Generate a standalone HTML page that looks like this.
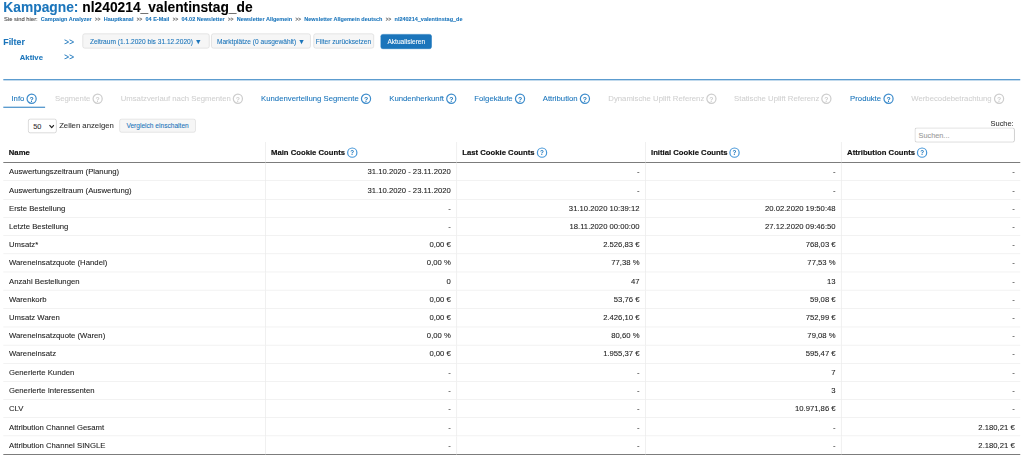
<!DOCTYPE html>
<html lang="de">
<head>
<meta charset="utf-8">
<title>Kampagne: nl240214_valentinstag_de</title>
<style>
html,body{margin:0;padding:0;background:#fff;overflow:hidden;}
body{width:1024px;height:457px;position:relative;}
#page{position:absolute;left:0;top:0;width:1862px;height:832px;transform:scale(0.55);transform-origin:0 0;
  font-family:"Liberation Sans","DejaVu Sans",sans-serif;font-size:14px;color:#222;-webkit-text-stroke:0.15px currentColor;}
#page *{box-sizing:border-box;}
.abs{position:absolute;white-space:nowrap;}
h1{position:absolute;left:6px;top:-2px;margin:0;font-size:25.1px;line-height:28px;font-weight:bold;color:#000;white-space:nowrap;}
h1 span{color:#1b75bb;}
.crumb{left:7.3px;top:29px;font-size:10.03px;line-height:12px;color:#444;}
.crumb a{color:#1b75bb;font-weight:bold;text-decoration:none;}
.crumb i{font-style:normal;color:#666;padding:0 6px;font-size:8.5px;font-weight:bold;}
.blue{color:#1b75bb;}
.btn{position:absolute;height:27.4px;line-height:28.6px;border:1px solid #d3d3d3;border-radius:4px;background:#f6f6f6;color:#1b75bb;font-size:12px;text-align:center;white-space:nowrap;}
.btn.primary{background:#1b75bb;border-color:#1b75bb;color:#fff;}
.hr{position:absolute;left:5.8px;width:1849.2px;top:143.5px;height:2px;background:#3584c4;}
.tab{position:absolute;top:169.3px;font-size:14.08px;line-height:20px;color:#1b75bb;white-space:nowrap;}
.tab.dis{color:#d0d0d0;}
.q{display:inline-block;width:19px;height:19px;vertical-align:-5px;margin-left:3.6px;overflow:visible;}
.q circle{fill:none;stroke:#3d8ccc;stroke-width:2.2;}
.q text{font-family:"Liberation Sans","DejaVu Sans",sans-serif;font-size:12.5px;font-weight:bold;fill:#1b75bb;text-anchor:middle;}
.dis .q circle{stroke:#cdcdcd;}
.dis .q text{fill:#cdcdcd;}
.dt{position:absolute;border-collapse:separate;border-spacing:0;table-layout:fixed;font-size:14px;color:#222;}
.dt th{height:38.1px;line-height:24px;padding:0 0 0 9.9px;text-align:left;font-weight:bold;color:#111;white-space:nowrap;border-bottom:1px solid #111;vertical-align:middle;-webkit-text-stroke:0.3px currentColor;}
.dt th:first-child{padding-left:10.2px;}
.dt td{height:33.15px;padding:0 10px 1.3px 0;text-align:right;white-space:nowrap;font-size:14px;border-bottom:1px solid #e7e7e7;vertical-align:middle;}
.dt td:first-child{text-align:left;padding-left:10.5px;font-size:14.08px;}
.dt th+th,.dt td+td{border-left:1px solid #e4e4e4;}
.dt tr:last-child td{border-bottom-color:#111;}
th .q{margin-left:3.5px;vertical-align:-5.2px;}
th .q circle{stroke:#4596d8;stroke-width:2.2;}
th .q text{font-size:11.5px;}
</style>
</head>
<body>
<div id="page">
<h1><span>Kampagne:</span> nl240214_valentinstag_de</h1>
<div class="abs crumb"><span style="font-size:10.6px">Sie sind hier:</span> &nbsp;<a>Campaign Analyzer</a><i>&gt;&gt;</i><a>Hauptkanal</a><i>&gt;&gt;</i><a>04 E-Mail</a><i>&gt;&gt;</i><a>04.02 Newsletter</a><i>&gt;&gt;</i><a>Newsletter Allgemein</a><i>&gt;&gt;</i><a>Newsletter Allgemein deutsch</a><i>&gt;&gt;</i><a>nl240214_valentinstag_de</a></div>
<div class="abs blue" style="left:6px;top:66px;font-size:16px;line-height:20px;font-weight:bold;">Filter</div>
<div class="abs blue" style="left:117px;top:66px;font-size:15px;line-height:20px;">&gt;&gt;</div>
<div class="abs blue" style="left:36px;top:93.5px;font-size:14px;line-height:20px;font-weight:bold;">Aktive</div>
<div class="abs blue" style="left:117px;top:94px;font-size:15px;line-height:20px;">&gt;&gt;</div>
<div class="btn" style="left:149.5px;top:60.9px;width:231.5px;">Zeitraum (1.1.2020 bis 31.12.2020) <span style="font-size:13px;line-height:0">▼</span></div>
<div class="btn" style="left:384px;top:60.9px;width:181px;">Marktplätze (0 ausgewählt) <span style="font-size:13px;line-height:0">▼</span></div>
<div class="btn" style="left:569.5px;top:60.9px;width:110px;">Filter zurücksetzen</div>
<div class="btn primary" style="left:692.2px;top:61.5px;width:93px;line-height:27.7px;">Aktualisieren</div>
<div class="hr"></div>
<div class="abs" style="left:5.8px;top:194px;width:76px;height:2px;background:#3584c4;"></div>
<div class="tab" style="left:20.8px;">Info<svg class="q" viewBox="0 0 19 19"><circle cx="9.5" cy="9.5" r="8.3"/><text x="9.5" y="14.6">?</text></svg></div>
<div class="tab dis" style="left:100.1px;">Segmente<svg class="q" viewBox="0 0 19 19"><circle cx="9.5" cy="9.5" r="8.3"/><text x="9.5" y="14.6">?</text></svg></div>
<div class="tab dis" style="left:219.4px;">Umsatzverlauf nach Segmenten<svg class="q" viewBox="0 0 19 19"><circle cx="9.5" cy="9.5" r="8.3"/><text x="9.5" y="14.6">?</text></svg></div>
<div class="tab" style="left:474.7px;">Kundenverteilung Segmente<svg class="q" viewBox="0 0 19 19"><circle cx="9.5" cy="9.5" r="8.3"/><text x="9.5" y="14.6">?</text></svg></div>
<div class="tab" style="left:707.8px;">Kundenherkunft<svg class="q" viewBox="0 0 19 19"><circle cx="9.5" cy="9.5" r="8.3"/><text x="9.5" y="14.6">?</text></svg></div>
<div class="tab" style="left:862.4px;">Folgekäufe<svg class="q" viewBox="0 0 19 19"><circle cx="9.5" cy="9.5" r="8.3"/><text x="9.5" y="14.6">?</text></svg></div>
<div class="tab" style="left:986.9px;">Attribution<svg class="q" viewBox="0 0 19 19"><circle cx="9.5" cy="9.5" r="8.3"/><text x="9.5" y="14.6">?</text></svg></div>
<div class="tab dis" style="left:1106.0px;">Dynamische Uplift Referenz<svg class="q" viewBox="0 0 19 19"><circle cx="9.5" cy="9.5" r="8.3"/><text x="9.5" y="14.6">?</text></svg></div>
<div class="tab dis" style="left:1334.7px;">Statische Uplift Referenz<svg class="q" viewBox="0 0 19 19"><circle cx="9.5" cy="9.5" r="8.3"/><text x="9.5" y="14.6">?</text></svg></div>
<div class="tab" style="left:1545.6px;">Produkte<svg class="q" viewBox="0 0 19 19"><circle cx="9.5" cy="9.5" r="8.3"/><text x="9.5" y="14.6">?</text></svg></div>
<div class="tab dis" style="left:1656.9px;">Werbecodebetrachtung<svg class="q" viewBox="0 0 19 19"><circle cx="9.5" cy="9.5" r="8.3"/><text x="9.5" y="14.6">?</text></svg></div>
<div class="abs" style="left:50.5px;top:215.7px;width:52.5px;height:26.6px;border:1px solid #bbb;border-radius:4px;background:#fff;font-size:13.33px;line-height:25.4px;padding-left:9px;color:#333;">50<svg style="position:absolute;right:3.5px;top:9px" width="10" height="8" viewBox="0 0 10 8"><path d="M1 1.5 L5 6 L9 1.5" fill="none" stroke="#222" stroke-width="2.2"/></svg></div>
<div class="abs" style="left:107.5px;top:218.3px;font-size:14.08px;line-height:20px;color:#333;">Zeilen anzeigen</div>
<div class="btn" style="left:217px;top:216px;width:139px;height:25px;line-height:23px;">Vergleich einschalten</div>
<div class="abs" style="left:1801px;top:214.9px;font-size:13.5px;line-height:20px;color:#333;">Suche:</div>
<div class="abs" style="left:1663px;top:232px;width:182px;height:27px;border:1px solid #aaa;border-radius:4px;background:#fff;font-size:13.33px;line-height:25px;padding-left:6px;color:#999;">Suchen...</div>
<table class="dt" style="left:5.80px;top:258.20px;width:1849.20px">
<colgroup><col style="width:476.10px"><col style="width:347.80px"><col style="width:343.10px"><col style="width:356.50px"><col style="width:325.70px"></colgroup>
<thead><tr><th>Name</th><th>Main Cookie Counts<svg class="q" viewBox="0 0 19 19"><circle cx="9.5" cy="9.5" r="8.4"/><text x="9.5" y="14">?</text></svg></th><th>Last Cookie Counts<svg class="q" viewBox="0 0 19 19"><circle cx="9.5" cy="9.5" r="8.4"/><text x="9.5" y="14">?</text></svg></th><th>Initial Cookie Counts<svg class="q" viewBox="0 0 19 19"><circle cx="9.5" cy="9.5" r="8.4"/><text x="9.5" y="14">?</text></svg></th><th>Attribution Counts<svg class="q" viewBox="0 0 19 19"><circle cx="9.5" cy="9.5" r="8.4"/><text x="9.5" y="14">?</text></svg></th></tr></thead>
<tbody>
<tr><td>Auswertungszeitraum (Planung)</td><td>31.10.2020 - 23.11.2020</td><td>-</td><td>-</td><td>-</td></tr>
<tr><td>Auswertungszeitraum (Auswertung)</td><td>31.10.2020 - 23.11.2020</td><td>-</td><td>-</td><td>-</td></tr>
<tr><td>Erste Bestellung</td><td>-</td><td>31.10.2020 10:39:12</td><td>20.02.2020 19:50:48</td><td>-</td></tr>
<tr><td>Letzte Bestellung</td><td>-</td><td>18.11.2020 00:00:00</td><td>27.12.2020 09:46:50</td><td>-</td></tr>
<tr><td>Umsatz*</td><td>0,00 €</td><td>2.526,83 €</td><td>768,03 €</td><td>-</td></tr>
<tr><td>Wareneinsatzquote (Handel)</td><td>0,00 %</td><td>77,38 %</td><td>77,53 %</td><td>-</td></tr>
<tr><td>Anzahl Bestellungen</td><td>0</td><td>47</td><td>13</td><td>-</td></tr>
<tr><td>Warenkorb</td><td>0,00 €</td><td>53,76 €</td><td>59,08 €</td><td>-</td></tr>
<tr><td>Umsatz Waren</td><td>0,00 €</td><td>2.426,10 €</td><td>752,99 €</td><td>-</td></tr>
<tr><td>Wareneinsatzquote (Waren)</td><td>0,00 %</td><td>80,60 %</td><td>79,08 %</td><td>-</td></tr>
<tr><td>Wareneinsatz</td><td>0,00 €</td><td>1.955,37 €</td><td>595,47 €</td><td>-</td></tr>
<tr><td>Generierte Kunden</td><td>-</td><td>-</td><td>7</td><td>-</td></tr>
<tr><td>Generierte Interessenten</td><td>-</td><td>-</td><td>3</td><td>-</td></tr>
<tr><td>CLV</td><td>-</td><td>-</td><td>10.971,86 €</td><td>-</td></tr>
<tr><td>Attribution Channel Gesamt</td><td>-</td><td>-</td><td>-</td><td>2.180,21 €</td></tr>
<tr><td>Attribution Channel SINGLE</td><td>-</td><td>-</td><td>-</td><td>2.180,21 €</td></tr>
</tbody></table>
</div>
</body>
</html>
